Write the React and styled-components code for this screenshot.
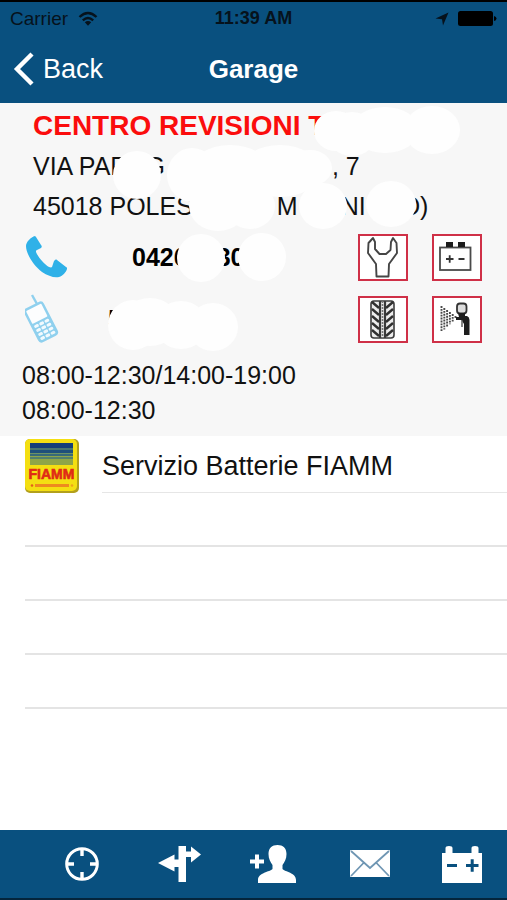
import React from "react";
import styled, { createGlobalStyle } from "styled-components";

const addressLines = [
  [
    { text: "VIA PAR", gap: 0 },
    { text: "G", gap: 17 },
    { text: ", 7", gap: 167 },
  ],
  [
    { text: "45018 POLES", gap: 0 },
    { text: "M", gap: 84 },
    { text: "NI", gap: 43 },
    { text: "O)", gap: 35 },
  ],
];

const hours = ["08:00-12:30/14:00-19:00", "08:00-12:30"];

const emptyRows = [1, 2, 3, 4];

// white marks that hide the private parts of the garage data
const hiddenSpots = [
  [336, 28, 22, 20],
  [352, 31, 25, 22],
  [385, 27, 34, 23],
  [432, 27, 28, 24],
  [137, 72, 24, 24],
  [192, 72, 25, 27],
  [230, 68, 40, 26],
  [280, 68, 40, 26],
  [310, 65, 22, 18],
  [218, 103, 29, 25],
  [250, 103, 25, 23],
  [323, 103, 24, 23],
  [391, 101, 25, 23],
  [201, 155, 24, 24],
  [262, 154, 24, 24],
  [133, 222, 25, 25],
  [150, 219, 28, 24],
  [181, 222, 26, 24],
  [213, 224, 25, 24],
];

const PhoneIcon = () => (
  <svg width="44" height="44" viewBox="0 0 44 44" aria-hidden="true">
    <path
      d="M10 1 C6 2 1 7 1 11 C1 19 9 31 17 37 C23 41 29 43 34 42 C38 41 41 37 42 34 C42 33 42 32 41 32 L32 25 C31 24 30 25 29 26 L27 32 C26 33 25 32 24 32 C19 29 13 22 11 17 C11 16 11 15 12 15 L16 13 C17 12 17 11 16 10 L11 2 Z"
      fill="#2fb1e8"
    />
  </svg>
);

const MobileIcon = () => (
  <svg width="44" height="52" viewBox="0 0 44 52" aria-hidden="true">
    <path d="M7 2 L12 11" stroke="#8fd0ee" strokeWidth="2.4" fill="none" />
    <g transform="rotate(-27 16 29)">
      <rect x="5" y="10" width="22" height="38" rx="4" fill="#8fd0ee" />
      <rect x="7.5" y="12.5" width="17" height="14.5" rx="1" fill="#fcfdfe" />
      {[29, 33.5, 38, 42.5].map((y) =>
        [7.8, 13.6, 19.4].map((x) => (
          <rect key={`${x}-${y}`} x={x} y={y} width="4.8" height="3" rx="1.2" fill="#f2fafe" />
        ))
      )}
    </g>
  </svg>
);

const WrenchIcon = () => (
  <svg width="46" height="43" viewBox="2 2 46 43" aria-hidden="true">
    <path
      d="M15 4 L10.5 9 L10 19 L18 30 L18.5 42.5 H30.5 L31 30 L39 19 L38.5 9 L35 4 L33 8 L32.5 16 L28 20 H21.5 L17 15 L17 8 Z"
      fill="#fff"
      stroke="#454545"
      strokeWidth="1.9"
      strokeLinejoin="round"
    />
  </svg>
);

const BatteryIcon = () => (
  <svg width="46" height="43" viewBox="2 2 46 43" aria-hidden="true">
    <rect x="8" y="13.5" width="30.5" height="22.5" fill="#fff" stroke="#4a4a4a" strokeWidth="1.8" />
    <rect x="14" y="8" width="7" height="5" fill="#1c1c1c" />
    <rect x="26" y="8" width="7" height="5" fill="#1c1c1c" />
    <path d="M14 25 H21.5 M17.7 21.2 V28.8 M26.5 25 H32.5" stroke="#333" strokeWidth="1.8" />
  </svg>
);

const TyreIcon = () => (
  <svg width="46" height="43" viewBox="2 2 46 43" aria-hidden="true">
    <rect x="13" y="5" width="23" height="37" rx="3" fill="#ececec" stroke="#3c3c3c" strokeWidth="1.6" />
    <path d="M22 5 V42 M27 5 V42" stroke="#3a3a3a" strokeWidth="2.2" />
    <path d="M24.5 5 V42" stroke="#777" strokeWidth="1.6" strokeDasharray="2 1" />
    {[8, 15, 22, 29, 36].map((y) => (
      <path
        key={y}
        d={`M14 ${y - 2} L21 ${y + 4} M35 ${y - 2} L28 ${y + 4}`}
        stroke="#303030"
        strokeWidth="2.4"
      />
    ))}
  </svg>
);

const SprayIcon = () => (
  <svg width="46" height="43" viewBox="2 2 46 43" aria-hidden="true">
    {[0, 1, 2, 3, 4, 5].map((i) => (
      <path
        key={i}
        d={`M${9.5 + i * 2.8} ${10 + i * 2} V${36 - i * 2.6}`}
        stroke="#4a4a4a"
        strokeWidth="1.9"
        strokeDasharray="1.9 1"
      />
    ))}
    <rect x="25" y="7.5" width="9.5" height="10" rx="3" fill="#ddd" stroke="#333" strokeWidth="1.8" />
    <path d="M26 17 H33 V20 H35 Q37.5 21 37.5 24 V39 H32 V28 L29.5 24 H24 V21 H27 Z" fill="#1d1d1d" />
    <path d="M30 24 V31" stroke="#555" strokeWidth="1.4" />
  </svg>
);

const FiammLogo = () => (
  <svg width="54" height="54" viewBox="0 0 54 54" role="img" aria-label="FIAMM">
    <rect x="0" y="0" width="54" height="54" rx="5" fill="#b3a01c" />
    <rect x="0" y="0" width="52" height="52" rx="5" fill="#f4df12" />
    <rect x="5" y="4" width="43" height="22" fill="#8fa548" />
    <rect x="5" y="4" width="43" height="5" fill="#153f78" />
    <rect x="5" y="9" width="43" height="2" fill="#47756f" />
    <rect x="5" y="11" width="43" height="3" fill="#1f4f7b" />
    <rect x="5" y="14" width="43" height="1" fill="#6d9265" />
    <rect x="5" y="15" width="43" height="2" fill="#386979" />
    <rect x="5" y="18" width="43" height="2" fill="#537f6d" />
    <text
      x="26.5"
      y="40"
      textAnchor="middle"
      fontFamily="'Liberation Sans', Arial, sans-serif"
      fontWeight="700"
      fontSize="14"
      fill="#e02a16"
      stroke="#e02a16"
      strokeWidth="0.6"
    >
      FIAMM
    </text>
    <rect x="10" y="45" width="34" height="3" fill="#ee8a1e" />
    <circle cx="7" cy="46.5" r="1.3" fill="#e3601b" />
    <circle cx="47" cy="46.5" r="1.3" fill="#eda31b" />
  </svg>
);

const TargetIcon = () => (
  <svg width="48" height="40" viewBox="0 0 48 40" aria-hidden="true">
    <circle cx="24" cy="20" r="15.3" fill="none" stroke="#fff" strokeWidth="3" />
    <path d="M24 5 V12 M24 28 V35 M9 20 H16 M32 20 H39" stroke="#fff" strokeWidth="3.4" />
  </svg>
);

const DirectionsIcon = () => (
  <svg width="48" height="40" viewBox="0 0 48 40" aria-hidden="true">
    <path
      d="M25.5 2 H33 V7.5 H38 V2.5 L48 10.5 L38 18.5 V13 H33 V38 H25.5 V23 H21.5 V27.5 L5 19 L21.5 10.5 V15.5 H25.5 Z"
      fill="#fff"
    />
  </svg>
);

const AddUserIcon = () => (
  <svg width="48" height="40" viewBox="0 0 48 40" aria-hidden="true">
    <path
      d="M29.5 1 C35 1 38.5 4 38.5 10 C38.5 15 36.5 18 34.5 21 V25 C37 28 48 28.5 48 36 V39 H10 V36 C10 28.5 22 28 24.5 25 V21 C22.5 18 20.5 15 20.5 10 C20.5 4 24 1 29.5 1 Z"
      fill="#fff"
    />
    <path d="M2 17.5 H16 M9 10.5 V24.5" stroke="#fff" strokeWidth="4" />
  </svg>
);

const MailIcon = () => (
  <svg width="48" height="40" viewBox="0 0 48 40" aria-hidden="true">
    <rect x="7" y="6" width="40" height="27" rx="1" fill="#fff" />
    <path d="M8 7 L27 24 L46 7 M8 32 L21 18.5 M46 32 L33 18.5" fill="none" stroke="#6f96b3" strokeWidth="1.8" />
  </svg>
);

const BatteryTabIcon = () => (
  <svg width="48" height="40" viewBox="0 0 48 40" aria-hidden="true">
    <path d="M4 9 H7.5 V4 Q7.5 2 11 2 Q14.5 2 14.5 4 V9 H33.5 V4 Q33.5 2 37 2 Q40.5 2 40.5 4 V9 H44 V39 H4 Z" fill="#fff" />
    <path d="M9 21.5 H19 M28 21.5 H40.5 M34.2 15.2 V27.8" stroke="#09507f" strokeWidth="3" />
  </svg>
);

const services = [
  { name: "Officina", Icon: WrenchIcon },
  { name: "Batterie", Icon: BatteryIcon },
  { name: "Gomme", Icon: TyreIcon },
  { name: "Carrozzeria", Icon: SprayIcon },
];

const tabs = [
  { name: "Posizione", Icon: TargetIcon },
  { name: "Indicazioni", Icon: DirectionsIcon },
  { name: "Aggiungi contatto", Icon: AddUserIcon },
  { name: "Email", Icon: MailIcon },
  { name: "Batteria", Icon: BatteryTabIcon },
];

const App = () => {
  return (
    <Root>
      <GlobalStyle />
      <Header>
        <StatusBar>
          <Carrier>
            Carrier
            <svg width="20" height="16" viewBox="0 0 20 16" aria-hidden="true">
              <path d="M1.5 6 Q10 -2 18.5 6 M4.8 9.3 Q10 4.6 15.2 9.3" fill="none" stroke="#06121c" strokeWidth="2.4" />
              <path d="M6.8 11.3 Q10 8.8 13.2 11.3 L10 14.8 Z" fill="#06121c" />
            </svg>
          </Carrier>
          <Clock>11:39 AM</Clock>
          <StatusIcons>
            <svg width="14" height="14" viewBox="0 0 14 14" aria-hidden="true">
              <path d="M13.5 .5 L8 13.5 L7 7.2 L.5 6.5 Z" fill="#06121c" />
            </svg>
            <svg width="39" height="15" viewBox="0 0 39 15" aria-hidden="true">
              <rect x="0" y="0" width="35" height="15" rx="2.5" fill="#000" />
              <path d="M36 5 Q38.5 5.5 38.5 7.5 Q38.5 9.5 36 10 Z" fill="#000" />
            </svg>
          </StatusIcons>
        </StatusBar>
        <NavBar>
          <BackButton type="button">
            <svg width="22" height="34" viewBox="0 0 22 34" aria-hidden="true">
              <path d="M20 2 L5 17 L20 32" fill="none" stroke="#fff" strokeWidth="4.4" />
            </svg>
            Back
          </BackButton>
          <PageTitle>Garage</PageTitle>
        </NavBar>
      </Header>

      <Details>
        <GarageName>CENTRO REVISIONI T</GarageName>
        {addressLines.map((line, index) => (
          <AddressLine key={index}>
            {line.map((part) => (
              <Part key={part.text} $gap={part.gap}>
                {part.text}
              </Part>
            ))}
          </AddressLine>
        ))}
        <Contacts>
          <div>
            <ContactLink href="tel:0426" $gap={63}>
              <PhoneIcon />
              <ContactText>
                <Part $gap={0}>0426</Part>
                <Part $gap={29}>30</Part>
              </ContactText>
            </ContactLink>
            <ContactLink href="tel:5" $gap={39} aria-label="Cellulare">
              <MobileIcon />
              <ContactText>5</ContactText>
            </ContactLink>
          </div>
          <Services>
            {services.map(({ name, Icon }) => (
              <ServiceButton key={name} type="button" aria-label={name}>
                <Icon />
              </ServiceButton>
            ))}
          </Services>
        </Contacts>
        <Hours>
          {hours.map((item) => (
            <HoursLine key={item}>{item}</HoursLine>
          ))}
        </Hours>
        <Hidden width="507" height="333" viewBox="0 0 507 333" aria-hidden="true">
          {hiddenSpots.map(([cx, cy, rx, ry]) => (
            <ellipse key={`${cx}-${cy}`} cx={cx} cy={cy} rx={rx} ry={ry} fill="#fefefe" />
          ))}
        </Hidden>
      </Details>

      <List>
        <ServiceRow>
          <FiammLogo />
          <ServiceName>Servizio Batterie FIAMM</ServiceName>
        </ServiceRow>
        {emptyRows.map((row) => (
          <EmptyRow key={row} />
        ))}
      </List>

      <TabBar>
        {tabs.map(({ name, Icon }) => (
          <TabButton key={name} type="button" aria-label={name}>
            <Icon />
          </TabButton>
        ))}
      </TabBar>
    </Root>
  );
};

const GlobalStyle = createGlobalStyle`
  * {
    box-sizing: border-box;
  }
  body {
    margin: 0;
    background-color: #fff;
    font-family: "Liberation Sans", Arial, sans-serif;
    color: #111;
  }
  svg {
    display: block;
    flex-shrink: 0;
  }
  button {
    padding: 0;
    border: none;
    background: none;
    color: inherit;
    font-family: inherit;
    cursor: pointer;
  }
`;
const Root = styled.div`
  min-height: 100vh;
  display: flex;
  flex-direction: column;
  background-color: #fff;
`;
const Header = styled.header`
  background-color: #09507f;
  border-top: 2px solid #000;
`;
const StatusBar = styled.div`
  display: grid;
  grid-template-columns: 1fr auto 1fr;
  align-items: center;
  height: 33px;
  padding: 0 10px;
  color: #06121c;
`;
const Carrier = styled.div`
  display: flex;
  align-items: center;
  gap: 10px;
  font-size: 19px;
`;
const Clock = styled.time`
  font-size: 18px;
  font-weight: 700;
`;
const StatusIcons = styled.div`
  display: flex;
  align-items: center;
  justify-content: flex-end;
  gap: 9px;
`;
const NavBar = styled.div`
  display: grid;
  grid-template-columns: 1fr auto 1fr;
  align-items: center;
  height: 68px;
  padding: 0 12px;
  color: #fff;
`;
const BackButton = styled.button`
  display: flex;
  align-items: center;
  gap: 9px;
  justify-self: start;
  font-size: 27px;
`;
const PageTitle = styled.h1`
  margin: 0;
  font-size: 26px;
  font-weight: 700;
`;
const Details = styled.section`
  position: relative;
  padding: 3px 0 8px;
  background-color: #f7f7f7;
  overflow: hidden;
`;
const GarageName = styled.h2`
  margin: 0;
  padding-left: 33px;
  font-size: 28px;
  line-height: 40px;
  color: #fb0d0d;
  white-space: nowrap;
`;
const AddressLine = styled.div`
  display: flex;
  padding-left: 33px;
  font-size: 25px;
  line-height: 40px;
  white-space: nowrap;
`;
const Part = styled.span`
  margin-left: ${({ $gap }) => $gap}px;
`;
const Contacts = styled.div`
  display: flex;
  justify-content: space-between;
  padding: 0 25px;
`;
const ContactLink = styled.a`
  display: flex;
  align-items: center;
  gap: ${({ $gap }) => $gap}px;
  height: 62px;
  color: #000;
  text-decoration: none;
`;
const ContactText = styled.span`
  display: flex;
  font-size: 25px;
  font-weight: 700;
`;
const Services = styled.div`
  display: grid;
  grid-template-columns: 50px 50px;
  grid-auto-rows: 62px;
  align-items: center;
  column-gap: 24px;
`;
const ServiceButton = styled.button`
  && {
    height: 47px;
    border: 2px solid #cf3047;
    background-color: #fff;
  }
`;
const Hours = styled.div`
  padding: 8px 22px 0;
`;
const HoursLine = styled.div`
  font-size: 25px;
  line-height: 35px;
`;
const Hidden = styled.svg`
  position: absolute;
  top: 0;
  left: 0;
  pointer-events: none;
`;
const List = styled.ul`
  flex: 1;
  margin: 0;
  padding: 0 0 0 25px;
  list-style: none;
`;
const ServiceRow = styled.li`
  display: flex;
  align-items: flex-end;
  gap: 23px;
  height: 57px;
`;
const ServiceName = styled.span`
  flex: 1;
  border-bottom: 1px solid #e6e6e6;
  font-size: 27px;
  line-height: 52px;
`;
const EmptyRow = styled.li`
  height: 54px;
  border-bottom: 2px solid #e4e4e4;
`;
const TabBar = styled.nav`
  display: flex;
  align-items: center;
  justify-content: space-between;
  height: 70px;
  padding: 0 21px 0 58px;
  background-color: #09507f;
  border-bottom: 2px solid #04253c;
`;
const TabButton = styled.button`
  width: 48px;
  height: 40px;
`;

export default App;
